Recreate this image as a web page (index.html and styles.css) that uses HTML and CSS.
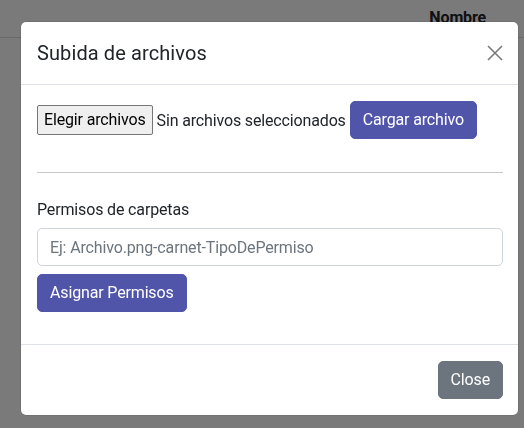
FILE: index.html
```html
<!DOCTYPE html>
<html lang="es">
<head>
<meta charset="utf-8">
<title>Subida de archivos</title>
<link rel="stylesheet" href="styles.css">
</head>
<body>
<div class="page">
  <div class="table-head">
    <span class="th">Nombre</span>
  </div>
</div>
<div class="backdrop"></div>
<div class="modal">
  <div class="modal-header">
    <h5 class="modal-title">Subida de archivos</h5>
    <button class="btn-close" type="button" aria-label="Close">
      <svg viewBox="0 0 16 16" width="16" height="16"><path d="M1 1L15 15M15 1L1 15" stroke="#7a7a7a" stroke-width="1.6" fill="none"/></svg>
    </button>
  </div>
  <div class="modal-body">
    <div class="upload-row">
      <span class="file-btn">Elegir archivos</span>
      <span class="file-text">Sin archivos seleccionados</span>
      <button class="btn btn-primary" type="button">Cargar archivo</button>
    </div>
    <hr class="divider">
    <label class="form-label">Permisos de carpetas</label>
    <input class="form-control" type="text" placeholder="Ej: Archivo.png-carnet-TipoDePermiso">
    <button class="btn btn-primary assign" type="button">Asignar Permisos</button>
  </div>
  <div class="modal-footer">
    <button class="btn btn-secondary" type="button">Close</button>
  </div>
</div>
</body>
</html>
```
FILE: styles.css
```css
* { box-sizing: border-box; }
html, body {
  margin: 0;
  width: 524px;
  height: 428px;
  overflow: hidden;
  font-family: Roboto, "Liberation Sans", sans-serif;
  letter-spacing: -0.15px;
  color: #212529;
}
body { background: #fff; }
.page { height: 428px; }
.table-head {
  height: 38px;
  border-bottom: 1px solid #dcdcdc;
  display: flex;
  justify-content: flex-end;
  padding-right: 38px;
}
.th {
  font-weight: 700;
  font-size: 16px;
  line-height: 24px;
  padding-top: 6px;
}
.backdrop {
  position: fixed;
  inset: 0;
  background: rgba(0, 0, 0, 0.52);
}
.modal {
  position: fixed;
  left: 21px;
  top: 22px;
  width: 497px;
  background: #fff;
  border-radius: 5px;
  box-shadow: 0 0 0 0.5px rgba(0,0,0,0.15);
}
.modal-header {
  display: flex;
  align-items: center;
  justify-content: space-between;
  padding: 16px 15px 16px 16px;
  border-bottom: 1px solid #dee2e6;
}
.modal-title {
  margin: 0;
  font-size: 20px;
  line-height: 30px;
  font-weight: 400;
  letter-spacing: 0.1px;
}
.btn-close {
  border: 0;
  background: none;
  padding: 0;
  width: 16px;
  height: 16px;
  display: flex;
}
.modal-body {
  padding: 16px 15px 32px 16px;
}
.upload-row {
  display: flex;
  align-items: center;
  font-size: 16px;
}
.file-btn {
  height: 30px;
  line-height: 28px;
  padding: 0 6px;
  background: #efefef;
  border: 1px solid #767676;
  border-radius: 2px;
  color: #000;
}
.file-text {
  margin-left: 4px;
  margin-right: 4px;
  color: #212529;
}
.btn {
  font-family: inherit;
  font-size: 16px;
  letter-spacing: inherit;
  line-height: 24px;
  padding: 6px 12px;
  border-radius: 5px;
  border: 1px solid transparent;
  color: #fff;
}
.btn-primary {
  background: #5155a9;
  border-color: #5155a9;
}
.btn-secondary {
  background: #6c757d;
  border-color: #6c757d;
}
.divider {
  margin: 33px 0 25px;
  border: 0;
  border-top: 1px solid #c8c8c8;
}
.form-label {
  display: block;
  font-size: 16px;
  line-height: 24px;
  margin-bottom: 6px;
}
.form-control {
  display: block;
  width: 100%;
  height: 38px;
  padding: 6px 12px;
  font-family: inherit;
  letter-spacing: inherit;
  font-size: 16px;
  border: 1px solid #ced4da;
  border-radius: 5px;
  color: #212529;
}
.form-control::placeholder { color: #6c757d; }
.assign {
  display: block;
  margin-top: 8px;
}
.modal-footer {
  display: flex;
  justify-content: flex-end;
  padding: 12px 11px 12px 12px;
  border-top: 1px solid #dee2e6;
}
.modal-footer .btn { margin: 4px; }
```
